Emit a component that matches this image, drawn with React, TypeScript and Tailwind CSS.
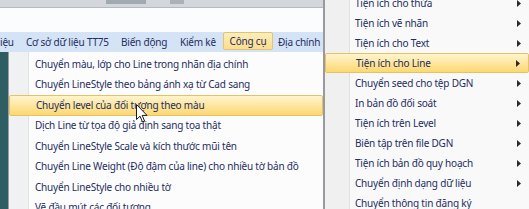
import React from "react";

const leftItems = [
  "Chuyển màu, lớp cho Line trong nhãn địa chính",
  "Chuyển LineStyle theo bảng ánh xạ từ Cad sang",
  "Chuyển level của đối tượng theo màu",
  "Dịch Line từ tọa độ giả định sang tọa thật",
  "Chuyển LineStyle Scale và kích thước mũi tên",
  "Chuyển Line Weight (Độ đậm của line) cho nhiều tờ bản đồ",
  "Chuyển LineStyle cho nhiều tờ",
  "Vẽ đầu mút các đối tượng",
];

const rightItems: { label: string; arrow: boolean }[] = [
  { label: "Tiện ích cho thửa", arrow: true },
  { label: "Tiện ích vẽ nhãn", arrow: true },
  { label: "Tiện ích cho Text", arrow: true },
  { label: "Tiện ích cho Line", arrow: true },
  { label: "Chuyển seed cho tệp DGN", arrow: true },
  { label: "In bản đồ đối soát", arrow: true },
  { label: "Tiện ích trên Level", arrow: true },
  { label: "Biên tập trên file DGN", arrow: true },
  { label: "Tiện ích bản đồ quy hoạch", arrow: true },
  { label: "Chuyển định dạng dữ liệu", arrow: true },
  { label: "Chuyển thông tin đăng ký", arrow: false },
];

const menuBar = [
  { label: "iệu", active: false, cls: "w-[26px] pl-0" },
  { label: "Cơ sở dữ liệu TT75", active: false, cls: "w-[95px] pl-0" },
  { label: "Biến động", active: false, cls: "w-[59px] pl-0" },
  { label: "Kiểm kê", active: false, cls: "w-[43px] pl-0" },
  { label: "Công cụ", active: true, cls: "w-[50px] justify-center" },
  { label: "Địa chính", active: false, cls: "w-[50px] pl-[5px]" },
];

function Arrow() {
  return (
    <svg width="4" height="7" viewBox="0 0 4 7" className="shrink-0">
      <path d="M0 0 L4 3.5 L0 7 Z" fill="#2a2a2a" />
    </svg>
  );
}

export default function App() {
  return (
    <div
      className="relative flex h-[209px] w-[529px] overflow-hidden bg-white text-[10px] tracking-[-0.2px] text-[#242d60]"
      style={{ fontFamily: '"Noto Sans", "DejaVu Sans", sans-serif' }}
    >
      {/* left column */}
      <div className="flex w-[323px] shrink-0 flex-col">
        {/* toolbar strip */}
        <div className="flex h-[8px] shrink-0 items-start border-b border-[#b4bac1] bg-[#d3d7db]">
          <div className="ml-[106px] h-[4px] w-[40px] bg-[#a1a9b1]" />
          <div className="ml-[24px] h-[4px] w-[14px] bg-[#aab1b8]" />
        </div>
        {/* white strip */}
        <div className="h-[24px] shrink-0 bg-[#fbfcfd]" />
        {/* menu bar */}
        <div className="flex h-[20px] shrink-0 items-stretch bg-[#d4e3f5]">
          {menuBar.map((m) => (
            <div
              key={m.label}
              className={`flex items-center whitespace-nowrap ${m.cls} ${
                m.active
                  ? "mb-[2px] rounded-[2px] border border-[#e6c373] bg-gradient-to-b from-[#fdeeb8] to-[#fbdd8e]"
                  : ""
              }`}
            >
              {m.label}
            </div>
          ))}
        </div>
        {/* body: teal backdrop + left dropdown */}
        <div className="flex min-h-0 flex-1">
          <div className="w-[8px] shrink-0 bg-[#2f5d64]" />
          <div className="relative flex min-w-0 flex-1 border-l border-[#9aa0a6] bg-[#fcfcfc]">
            <div className="w-[20px] shrink-0 border-r border-[#e2e3e3] bg-[#f0f1f2]" />
            <div className="absolute inset-0 flex flex-col pt-[2px]">
              {leftItems.map((t, i) => (
                <div
                  key={t}
                  className={`flex h-[20.5px] shrink-0 items-center whitespace-nowrap pl-[26px] ${
                    i === 2
                      ? "rounded-[2px] border border-[#e5c26a] bg-gradient-to-b from-[#fff4cc] to-[#fcd86e] pl-[25px]"
                      : ""
                  }`}
                >
                  {t}
                </div>
              ))}
            </div>
          </div>
        </div>
      </div>

      {/* right dropdown */}
      <div className="relative flex flex-1 border-l-2 border-[#979a9e] bg-[#f9f9f9]">
        <div className="w-[25px] shrink-0 border-r border-[#e0e1e2] bg-[#f0f0f0]" />
        <div className="absolute inset-0 flex flex-col -mt-[7px]">
          {rightItems.map((r, i) => (
            <div
              key={r.label}
              className={`flex h-[20px] shrink-0 items-center justify-between whitespace-nowrap pl-[30px] pr-[8px] ${
                i === 3
                  ? "rounded-[2px] border border-[#e5c26a] bg-gradient-to-b from-[#fff4cc] to-[#fcd86e] pl-[29px]"
                  : ""
              }`}
            >
              <span>{r.label}</span>
              {r.arrow ? <Arrow /> : null}
            </div>
          ))}
        </div>
      </div>

      {/* mouse cursor */}
      <svg
        className="pointer-events-none absolute left-[136px] top-[104px]"
        width="12"
        height="19"
        viewBox="0 0 12 19"
      >
        <path
          d="M0.5 0.5 L0.5 15.5 L4 12.2 L6.5 18 L8.6 17.1 L6.2 11.4 L11 11.4 Z"
          fill="#ffffff"
          stroke="#1a1a1a"
          strokeWidth="1"
          strokeLinejoin="round"
        />
      </svg>
    </div>
  );
}
